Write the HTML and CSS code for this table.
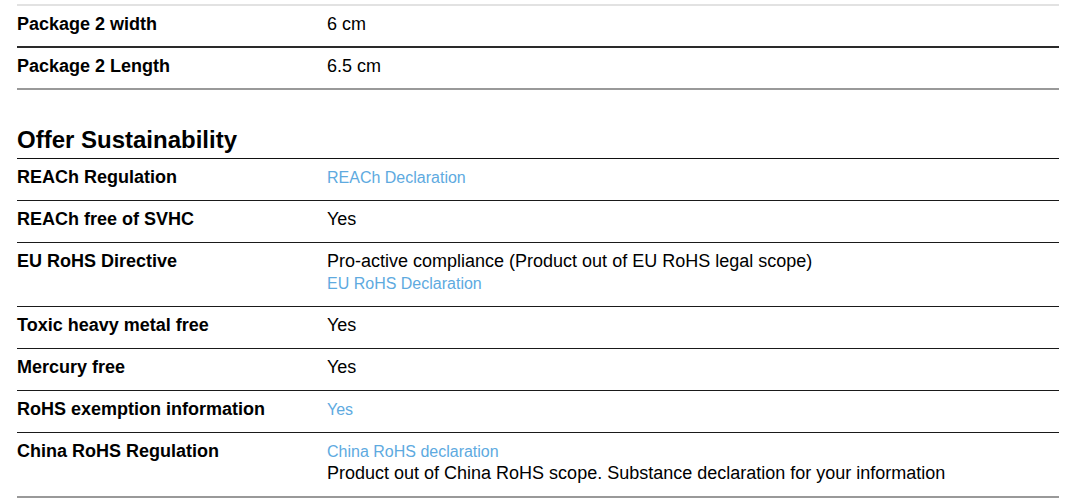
FILE: index.html
```html
<!DOCTYPE html>
<html>
<head>
<meta charset="utf-8">
<link rel="stylesheet" href="styles.css">
</head>
<body>
<div class="page">
  <div class="table first">
    <div class="row">
      <div class="label">Package 2 width</div>
      <div class="value">6 cm</div>
    </div>
    <div class="row">
      <div class="label">Package 2 Length</div>
      <div class="value">6.5 cm</div>
    </div>
  </div>

  <h2 class="section-title">Offer Sustainability</h2>
  <div class="table second">
    <div class="row">
      <div class="label">REACh Regulation</div>
      <div class="value"><a class="link">REACh Declaration</a></div>
    </div>
    <div class="row">
      <div class="label">REACh free of SVHC</div>
      <div class="value">Yes</div>
    </div>
    <div class="row">
      <div class="label">EU RoHS Directive</div>
      <div class="value">Pro-active compliance (Product out of EU RoHS legal scope)<br><a class="link">EU RoHS Declaration</a></div>
    </div>
    <div class="row">
      <div class="label">Toxic heavy metal free</div>
      <div class="value">Yes</div>
    </div>
    <div class="row">
      <div class="label">Mercury free</div>
      <div class="value">Yes</div>
    </div>
    <div class="row">
      <div class="label">RoHS exemption information</div>
      <div class="value"><a class="link">Yes</a></div>
    </div>
    <div class="row">
      <div class="label">China RoHS Regulation</div>
      <div class="value"><a class="link">China RoHS declaration</a><br>Product out of China RoHS scope. Substance declaration for your information</div>
    </div>
  </div>
</div>
</body>
</html>
```

FILE: styles.css
```css
html, body {
  margin: 0;
  padding: 0;
  background: #fff;
}
body {
  font-family: "Liberation Sans", Arial, sans-serif;
  color: #000;
}
.page {
  padding: 4px 21px 0 17px;
}
.table {
  display: flex;
  flex-direction: column;
}
.first {
  border-top: 2px solid #e2e2e2;
}
.row {
  display: grid;
  grid-template-columns: 310px 1fr;
  padding: 7px 0 12px;
  line-height: 22px;
  font-size: 18px;
  border-bottom: 1px solid #1a1a1a;
}
.first .row {
  padding-bottom: 11px;
}
.first .row:first-child {
  border-bottom: 2px solid #2a2a2a;
}
.row:last-child {
  border-bottom: 2px solid #999;
}
.label {
  font-weight: bold;
}
.value {
  height: auto;
}
.link {
  color: #5eaadf;
  font-size: 16px;
  line-height: 16px;
  text-decoration: none;
}
.section-title {
  margin: 0;
  padding: 36px 0 4px;
  font-size: 24px;
  line-height: 28px;
  font-weight: bold;
  border-bottom: 1px solid #111;
}
```
